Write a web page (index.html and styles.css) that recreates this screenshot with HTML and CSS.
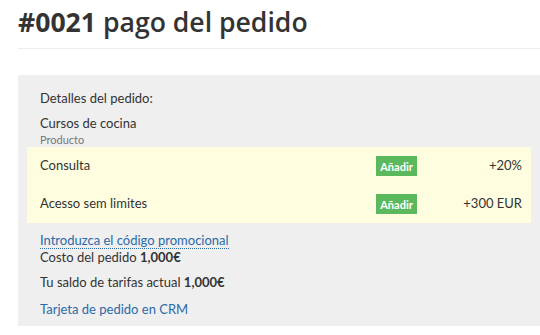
FILE: index.html
```html
<!DOCTYPE html>
<html lang="es">
<head>
    <meta charset="UTF-8">
    <meta name="viewport" content="width=device-width, initial-scale=1.0">
    <title>Pago del pedido</title>
    <link rel="stylesheet" href="styles.css">
</head>
<body>
    <div class="page-header">
        <h1><b>#0021</b> pago del pedido</h1>
    </div>
    <div class="order-box">
        <div class="label">Detalles del pedido:</div>
        <div class="product">
            <div class="product-name">Cursos de cocina</div>
            <div class="product-type">Producto</div>
        </div>
        <div class="options">
            <div class="option">
                <span class="option-name">Consulta</span>
                <button class="add-btn">Añadir</button>
                <span class="option-price">+20%</span>
            </div>
            <div class="option">
                <span class="option-name">Acesso sem limites</span>
                <button class="add-btn">Añadir</button>
                <span class="option-price">+300 EUR</span>
            </div>
        </div>
        <div class="promo"><a href="#" class="promo-link">Introduzca el código promocional</a></div>
        <div class="total">Costo del pedido <b>1,000€</b></div>
        <div class="balance">Tu saldo de tarifas actual <b>1,000€</b></div>
        <div class="crm"><a href="#" class="crm-link">Tarjeta de pedido en CRM</a></div>
    </div>
</body>
</html>
```

FILE: styles.css
```css
body {
    margin: 0;
    padding: 0 0 0 18px;
    background-color: #ffffff;
    color: #333333;
    font-family: Lato, "Open Sans", sans-serif;
    font-size: 13px;
}
.page-header {
    border-bottom: 1px solid #eeeeee;
    height: 48px;
}
h1 {
    margin: 0;
    padding-top: 5px;
    font-family: "Open Sans", Lato, sans-serif;
    font-size: 26.6px;
    line-height: 34px;
    font-weight: 600;
    color: #333333;
}
h1 b {
    font-weight: 700;
}
.order-box {
    margin-top: 26px;
    background-color: #efefef;
    padding: 14px 0 8px 0;
}
.label,
.product,
.promo,
.total,
.balance,
.crm {
    padding-left: 22px;
    line-height: 18px;
}
.product {
    margin-top: 7px;
}
.product-type {
    font-size: 11px;
    line-height: 15px;
    color: #777777;
}
.options {
    margin: 0 9px;
    background-color: #fffde0;
}
.option {
    display: grid;
    grid-template-columns: 1fr auto 105px;
    align-items: center;
    height: 38px;
    padding: 0 9px 0 13px;
}
.option-name {
    margin-top: -3px;
}
.option-price {
    text-align: right;
    margin-top: -3px;
}
.add-btn {
    background-color: #5cb85c;
    color: #ffffff;
    border: none;
    padding: 0;
    width: 41px;
    height: 20px;
    font-family: Lato, "Open Sans", sans-serif;
    font-size: 11px;
    font-weight: 700;
    cursor: pointer;
}
.promo {
    margin-top: 9px;
    line-height: 16px;
}
.promo-link {
    color: #2a6aa8;
    text-decoration: none;
    border-bottom: 1px dotted #2a6aa8;
}
.balance {
    margin-top: 7px;
}
.crm {
    margin-top: 9px;
}
.crm-link {
    color: #2a6aa8;
    text-decoration: none;
}
```
